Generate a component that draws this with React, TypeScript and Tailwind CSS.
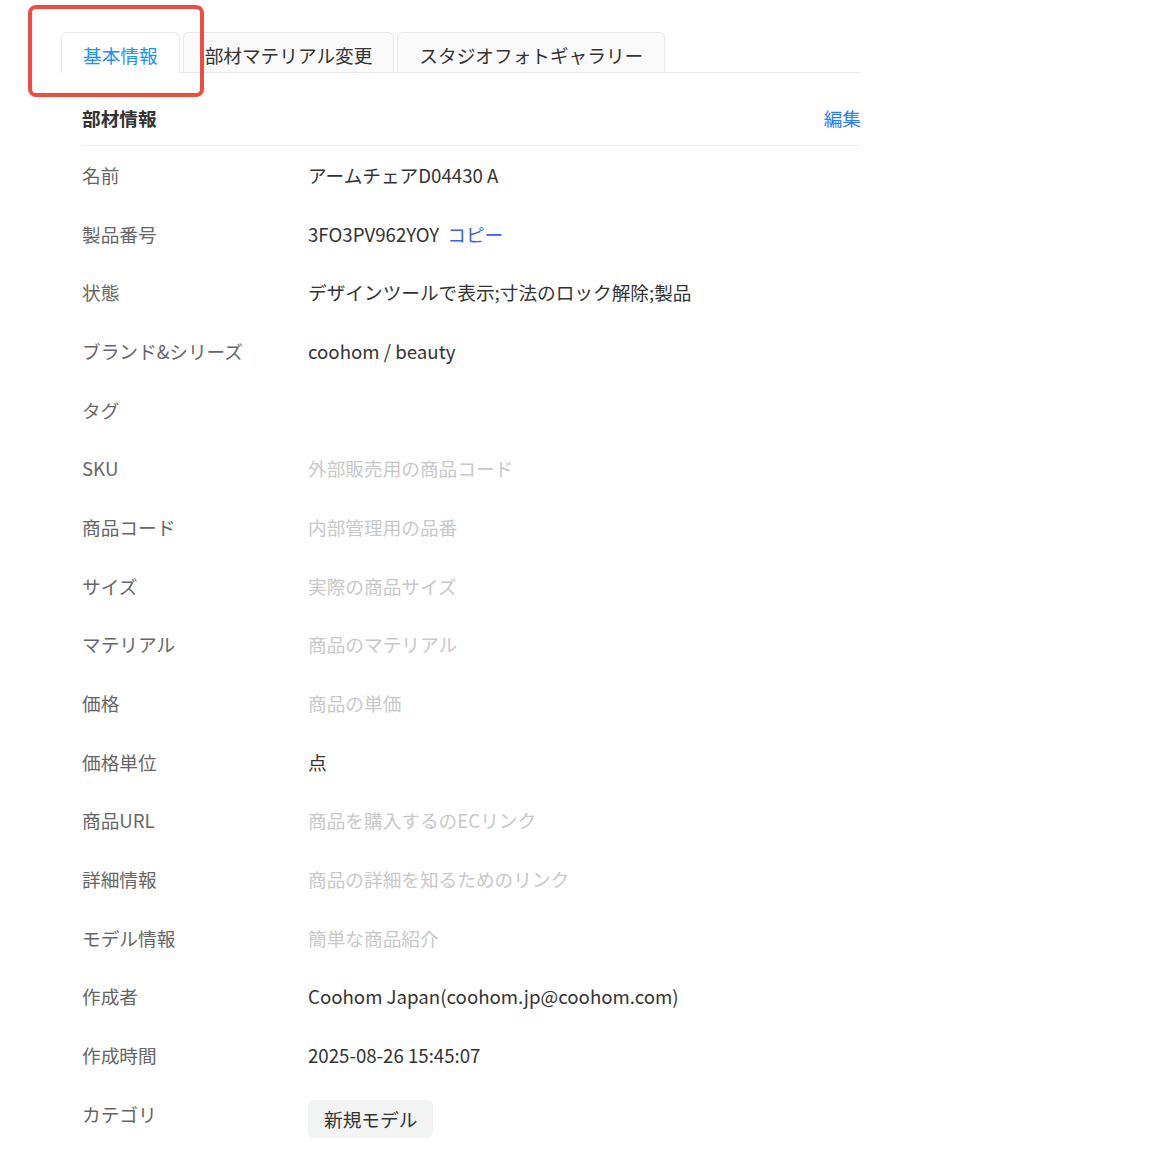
import React from 'react';

type Row = {
  label: string;
  value?: string;
  placeholder?: string;
  copy?: boolean;
  tag?: string;
};

const rows: Row[] = [
  { label: '名前', value: 'アームチェアD04430 A' },
  { label: '製品番号', value: '3FO3PV962YOY', copy: true },
  { label: '状態', value: 'デザインツールで表示;寸法のロック解除;製品' },
  { label: 'ブランド&シリーズ', value: 'coohom / beauty' },
  { label: 'タグ', value: '' },
  { label: 'SKU', placeholder: '外部販売用の商品コード' },
  { label: '商品コード', placeholder: '内部管理用の品番' },
  { label: 'サイズ', placeholder: '実際の商品サイズ' },
  { label: 'マテリアル', placeholder: '商品のマテリアル' },
  { label: '価格', placeholder: '商品の単価' },
  { label: '価格単位', value: '点' },
  { label: '商品URL', placeholder: '商品を購入するのECリンク' },
  { label: '詳細情報', placeholder: '商品の詳細を知るためのリンク' },
  { label: 'モデル情報', placeholder: '簡単な商品紹介' },
  { label: '作成者', value: 'Coohom Japan(coohom.jp@coohom.com)' },
  { label: '作成時間', value: '2025-08-26 15:45:07' },
  { label: 'カテゴリ', tag: '新規モデル' },
];

const tabs = ['基本情報', '部材マテリアル変更', 'スタジオフォトギャラリー'];

export default function App() {
  return (
    <div
      className="relative min-h-[1166px] bg-white text-[18.67px] leading-[28px]"
      style={{ fontFamily: '"Noto Sans CJK JP", "Noto Sans", sans-serif' }}
    >
      {/* annotation box */}
      <div className="absolute left-[28px] top-[5px] h-[92px] w-[176px] rounded-[8px] border-[4px] border-[#f04b40]" />

      <div className="w-[800px] pl-[61px] pt-[32px] box-content">
        {/* tabs */}
        <div className="flex items-end gap-[3px] border-b border-[#e8e8e8]">
          {tabs.map((t, i) => (
            <div
              key={t}
              className={
                i === 0
                  ? '-mb-px flex h-[41px] items-center rounded-t-[6px] border border-b-0 border-[#e8e8e8] bg-white px-[21px] pt-[4px] text-[#1890ff]'
                  : 'flex h-[40px] items-center rounded-t-[6px] border border-b-0 border-[#e8e8e8] bg-[#fafafa] px-[21px] pt-[4px] text-[#333]'
              }
            >
              {t}
            </div>
          ))}
        </div>

        <div className="ml-[21px]">
          {/* section header */}
          <div className="flex h-[73px] items-center justify-between border-b border-[#f0f0f0] pt-[17px]">
            <span className="font-bold text-[#333]">部材情報</span>
            <span className="text-[#2f7bff]">編集</span>
          </div>

          {rows.map((r) => (
            <div key={r.label} className="flex h-[58.67px] items-start pt-[15px]">
              <div className="w-[226px] shrink-0 text-[#666]">{r.label}</div>
              <div className="flex-1">
                {r.tag ? (
                  <span className="inline-flex h-[38px] items-center rounded-[6px] bg-[#f2f3f3] px-[16px] text-[#333]">
                    {r.tag}
                  </span>
                ) : r.placeholder ? (
                  <span className="text-[#c8c8c8]">{r.placeholder}</span>
                ) : (
                  <span className="text-[#333]">
                    {r.value}
                    {r.copy && <span className="ml-[8px] text-[#3d5cff]">コピー</span>}
                  </span>
                )}
              </div>
            </div>
          ))}
        </div>
      </div>
    </div>
  );
}
